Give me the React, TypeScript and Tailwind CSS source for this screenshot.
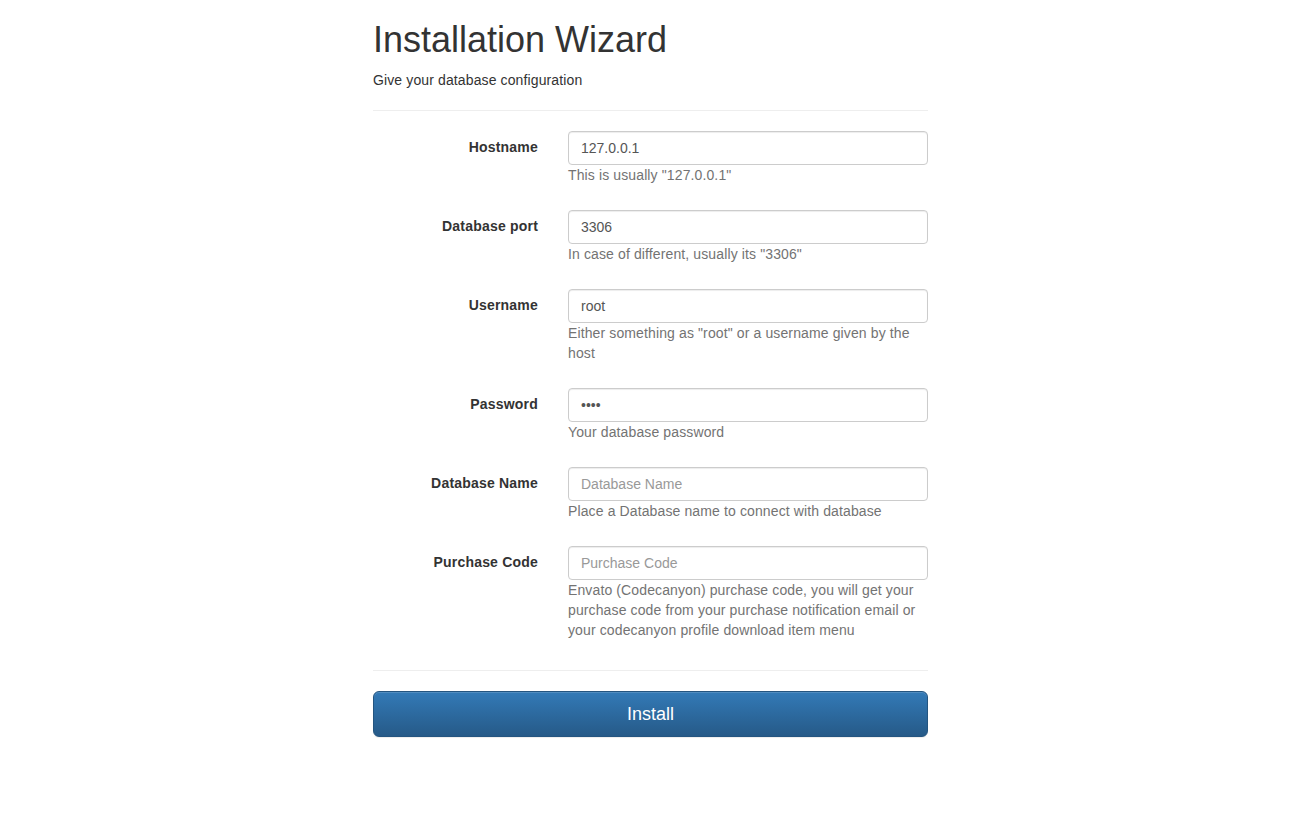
import React from 'react';

interface Field {
  label: string;
  type: string;
  value?: string;
  placeholder?: string;
  help: string;
}

const fields: Field[] = [
  { label: 'Hostname', type: 'text', value: '127.0.0.1', help: 'This is usually "127.0.0.1"' },
  { label: 'Database port', type: 'text', value: '3306', help: 'In case of different, usually its "3306"' },
  { label: 'Username', type: 'text', value: 'root', help: 'Either something as "root" or a username given by the host' },
  { label: 'Password', type: 'password', value: 'root', help: 'Your database password' },
  { label: 'Database Name', type: 'text', placeholder: 'Database Name', help: 'Place a Database name to connect with database' },
  {
    label: 'Purchase Code',
    type: 'text',
    placeholder: 'Purchase Code',
    help: 'Envato (Codecanyon) purchase code, you will get your purchase code from your purchase notification email or your codecanyon profile download item menu',
  },
];

const App: React.FC = () => {
  return (
    <div className="min-h-[837px] bg-white font-['Liberation_Sans',Arial,sans-serif] text-[14px] leading-[20px] text-[#333]">
      <div className="mx-auto w-[555px]">
        {/* En-tête */}
        <h1 className="pt-[20px] text-[36px] leading-[39.6px] font-normal text-[#333]">Installation Wizard</h1>
        <p className="mt-[10px] tracking-[0.12px]">Give your database configuration</p>
        <hr className="mt-[20px] border-0 border-t border-[#eee]" />

        {/* Formulaire */}
        <form className="mt-[20px]" onSubmit={(e) => e.preventDefault()}>
          {fields.map((f, i) => (
            <div
              key={f.label}
              className={`flex gap-[30px] ${i === fields.length - 1 ? 'mb-[30px]' : 'mb-[25px]'}`}
            >
              <label className="w-[165px] shrink-0 pt-[6px] text-right font-bold tracking-[0.2px]">{f.label}</label>
              <div className="w-[360px]">
                <input
                  type={f.type}
                  defaultValue={f.value}
                  placeholder={f.placeholder}
                  className="block h-[34px] w-full rounded-[4px] border border-[#ccc] bg-white px-[12px] py-[6px] text-[14px] text-[#555] shadow-[inset_0_1px_1px_rgba(0,0,0,0.075)] outline-none placeholder:text-[#999]"
                />
                <span className="block tracking-[0.12px] text-[#737373]">{f.help}</span>
              </div>
            </div>
          ))}

          <hr className="border-0 border-t border-[#eee]" />

          <button
            type="submit"
            className="mt-[20px] block h-[46px] w-full rounded-[6px] border border-[#245580] bg-gradient-to-b from-[#337ab7] to-[#265a88] text-[18px] leading-[24px] text-white shadow-[inset_0_1px_0_rgba(255,255,255,0.15),0_1px_1px_rgba(0,0,0,0.075)]"
          >
            Install
          </button>
        </form>
      </div>
    </div>
  );
};

export default App;
